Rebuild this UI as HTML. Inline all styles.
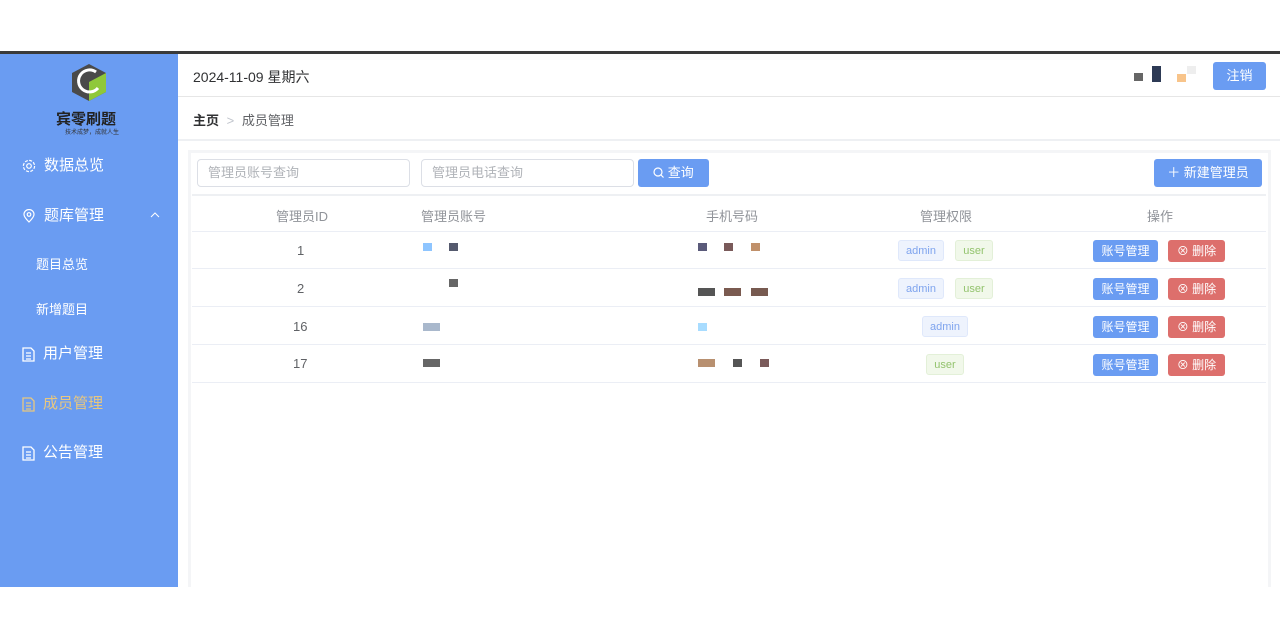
<!DOCTYPE html>
<html><head><meta charset="utf-8"><style>
*{margin:0;padding:0;box-sizing:border-box}
body{width:1280px;height:639px;background:#fff;font-family:"Liberation Sans","Noto Sans CJK SC",sans-serif;position:relative;overflow:hidden;color:#606266}
.a{position:absolute}
.side{left:0;top:54px;width:178px;height:533px;background:#6a9cf2}
.mi{position:absolute;left:22px;color:#fff;font-size:15px;display:flex;align-items:center;gap:8px;line-height:20px}
.mi svg{flex:none}
.sub{position:absolute;left:36px;color:#fff;font-size:13px}
.inp{position:absolute;top:159px;height:28px;border:1px solid #dcdfe6;border-radius:4px;font-size:13px;color:#b0b3b8;padding:0 10px;line-height:26px}
.btn{position:absolute;color:#fff;border-radius:3px;font-size:12px;text-align:center}
.th{position:absolute;top:206px;font-size:13px;color:#909399}
.row{position:absolute;left:192px;width:1074px;border-bottom:1px solid #ebeef5}
.td{position:absolute;font-size:13px;color:#606266}
.tag{position:absolute;height:21px;border-radius:3px;font-size:11px;line-height:20px;text-align:center}
.ad{background:#eef3fd;border:1px solid #dfe8fb;color:#7fa4ee;width:46px}
.us{background:#f1f8ea;border:1px solid #e3f0d8;color:#93c36d;width:38px}
.px{position:absolute;width:9px;height:8px}
</style></head><body>
<div class="a" style="left:0;top:51px;width:1280px;height:3px;background:#3a3a3a"></div>
<div class="a side">
 <svg class="a" style="left:70px;top:8px" width="38" height="40" viewBox="0 0 38 40"><polygon points="19,2 36,11 36,30 19,39 2,30 2,11" fill="#4a4a4a"/><polygon points="19,20 36,11 36,30 19,39" fill="#8fc83a"/><path d="M26 10 A11 11 0 1 0 28 26" stroke="#fff" stroke-width="3" fill="none"/></svg>
 <div class="a" style="left:56px;top:54px;font-size:15px;font-weight:bold;color:#222">宾零刷题</div>
 <div class="a" style="left:65px;top:73px;font-size:6px;color:#333">技术成梦，成就人生</div>
 <div class="mi" style="top:102px"><svg width="14" height="14" viewBox="0 0 14 14"><circle cx="7" cy="7" r="2.3" fill="none" stroke="#fff" stroke-width="1.2"/><circle cx="7" cy="7" r="5.6" fill="none" stroke="#fff" stroke-width="1.2" stroke-dasharray="3 1.4"/></svg>数据总览</div>
 <div class="mi" style="top:152px"><svg width="14" height="14" viewBox="0 0 14 14"><path d="M7 13 C3 9 2 7 2 5.5 A5 5 0 0 1 12 5.5 C12 7 11 9 7 13Z" fill="none" stroke="#fff" stroke-width="1.2"/><circle cx="7" cy="5.5" r="1.8" fill="none" stroke="#fff" stroke-width="1.2"/></svg>题库管理</div>
 <svg class="a" style="left:150px;top:158px" width="10" height="6" viewBox="0 0 10 6"><path d="M1 5 L5 1 L9 5" stroke="#fff" fill="none"/></svg>
 <div class="sub" style="top:200px">题目总览</div>
 <div class="sub" style="top:245px">新增题目</div>
 <div class="mi" style="top:290px"><svg width="13" height="15" viewBox="0 0 13 15"><path d="M1 1 H9 L12 4 V14 H1Z M4 6 H9 M4 9 H9 M4 12 H9" fill="none" stroke="#fff" stroke-width="1.3"/></svg>用户管理</div>
 <div class="mi" style="top:340px;color:#e8c77f"><svg width="13" height="15" viewBox="0 0 13 15"><path d="M1 1 H9 L12 4 V14 H1Z M4 6 H9 M4 9 H9 M4 12 H9" fill="none" stroke="#e8c77f" stroke-width="1.3"/></svg>成员管理</div>
 <div class="mi" style="top:389px"><svg width="13" height="15" viewBox="0 0 13 15"><path d="M1 1 H9 L12 4 V14 H1Z M4 6 H9 M4 9 H9 M4 12 H9" fill="none" stroke="#fff" stroke-width="1.3"/></svg>公告管理</div>
</div>
<div class="a" style="left:178px;top:96px;width:1102px;height:1px;background:#e6e6e6"></div>
<div class="a" style="left:193px;top:67px;font-size:14px;color:#303133">2024-11-09 星期六</div>
<div class="px" style="left:1134px;top:73px;background:#666"></div>
<div class="px" style="left:1152px;top:66px;height:16px;background:#2d3a55"></div>
<div class="px" style="left:1177px;top:74px;background:#f8c48a"></div>
<div class="px" style="left:1187px;top:66px;background:#eee"></div>
<div class="btn" style="left:1213px;top:62px;width:53px;height:28px;line-height:28px;font-size:13px;background:#6a9cf2">注销</div>
<div class="a" style="left:193px;top:110px;font-size:13px;color:#303133;font-weight:bold">主页 <span style="font-weight:normal;color:#c0c4cc;margin:0 4px">&gt;</span> <span style="font-weight:normal;color:#606266">成员管理</span></div>
<div class="a" style="left:178px;top:139px;width:1102px;height:2px;background:#eef0f3"></div>
<div class="a" style="left:188px;top:150px;width:1083px;height:437px;border:3px solid #f4f5f7;border-bottom:none"></div>
<div class="a" style="left:192px;top:194px;width:1074px;height:2px;background:#eef0f3"></div>
<div class="inp" style="left:197px;width:213px">管理员账号查询</div>
<div class="inp" style="left:421px;width:213px">管理员电话查询</div>
<div class="btn" style="left:638px;top:159px;width:71px;height:28px;line-height:28px;font-size:13px;background:#6a9cf2"><svg width="11" height="11" viewBox="0 0 11 11" style="vertical-align:-1px"><circle cx="5" cy="5" r="4" fill="none" stroke="#fff" stroke-width="1.2"/><path d="M8 8 L10.5 10.5" stroke="#fff" stroke-width="1.2"/></svg> 查询</div>
<div class="btn" style="left:1154px;top:159px;width:108px;height:28px;line-height:28px;font-size:13px;background:#6a9cf2">＋ 新建管理员</div>
<div class="th" style="left:276px">管理员ID</div>
<div class="th" style="left:421px">管理员账号</div>
<div class="th" style="left:706px">手机号码</div>
<div class="th" style="left:920px">管理权限</div>
<div class="th" style="left:1147px">操作</div>
<div class="row" style="top:195px;height:37px"></div>
<div class="row" style="top:232px;height:37px"></div>
<div class="row" style="top:269px;height:38px"></div>
<div class="row" style="top:307px;height:38px"></div>
<div class="row" style="top:345px;height:38px"></div>
<div class="td" style="left:297px;top:243px">1</div>
<div class="td" style="left:297px;top:281px">2</div>
<div class="td" style="left:293px;top:319px">16</div>
<div class="td" style="left:293px;top:356px">17</div>
<div class="px" style="left:423px;top:243px;background:#8ec5ff"></div>
<div class="px" style="left:449px;top:243px;background:#555a6e"></div>
<div class="px" style="left:449px;top:279px;background:#666"></div>
<div class="px" style="left:423px;top:323px;width:17px;background:#a9b8cc"></div>
<div class="px" style="left:423px;top:359px;width:17px;background:#666"></div>
<div class="px" style="left:698px;top:243px;background:#5a5a7a"></div>
<div class="px" style="left:724px;top:243px;background:#7a5a5a"></div>
<div class="px" style="left:751px;top:243px;background:#c0906a"></div>
<div class="px" style="left:698px;top:288px;width:17px;background:#555"></div>
<div class="px" style="left:724px;top:288px;width:17px;background:#7a5a50"></div>
<div class="px" style="left:751px;top:288px;width:17px;background:#775a50"></div>
<div class="px" style="left:698px;top:323px;background:#a8dcff"></div>
<div class="px" style="left:698px;top:359px;width:17px;background:#b89070"></div>
<div class="px" style="left:733px;top:359px;background:#555"></div>
<div class="px" style="left:760px;top:359px;background:#7a5a5a"></div>
<div class="tag ad" style="left:898px;top:240px">admin</div><div class="tag us" style="left:955px;top:240px">user</div>
<div class="tag ad" style="left:898px;top:278px">admin</div><div class="tag us" style="left:955px;top:278px">user</div>
<div class="tag ad" style="left:922px;top:316px">admin</div>
<div class="tag us" style="left:926px;top:354px">user</div>
<div class="btn" style="left:1093px;top:240px;width:65px;height:22px;line-height:22px;background:#6a9cf2">账号管理</div><div class="btn" style="left:1168px;top:240px;width:57px;height:22px;line-height:22px;background:#dd6f6c">⊗ 删除</div>
<div class="btn" style="left:1093px;top:278px;width:65px;height:22px;line-height:22px;background:#6a9cf2">账号管理</div><div class="btn" style="left:1168px;top:278px;width:57px;height:22px;line-height:22px;background:#dd6f6c">⊗ 删除</div>
<div class="btn" style="left:1093px;top:316px;width:65px;height:22px;line-height:22px;background:#6a9cf2">账号管理</div><div class="btn" style="left:1168px;top:316px;width:57px;height:22px;line-height:22px;background:#dd6f6c">⊗ 删除</div>
<div class="btn" style="left:1093px;top:354px;width:65px;height:22px;line-height:22px;background:#6a9cf2">账号管理</div><div class="btn" style="left:1168px;top:354px;width:57px;height:22px;line-height:22px;background:#dd6f6c">⊗ 删除</div>
</body></html>
